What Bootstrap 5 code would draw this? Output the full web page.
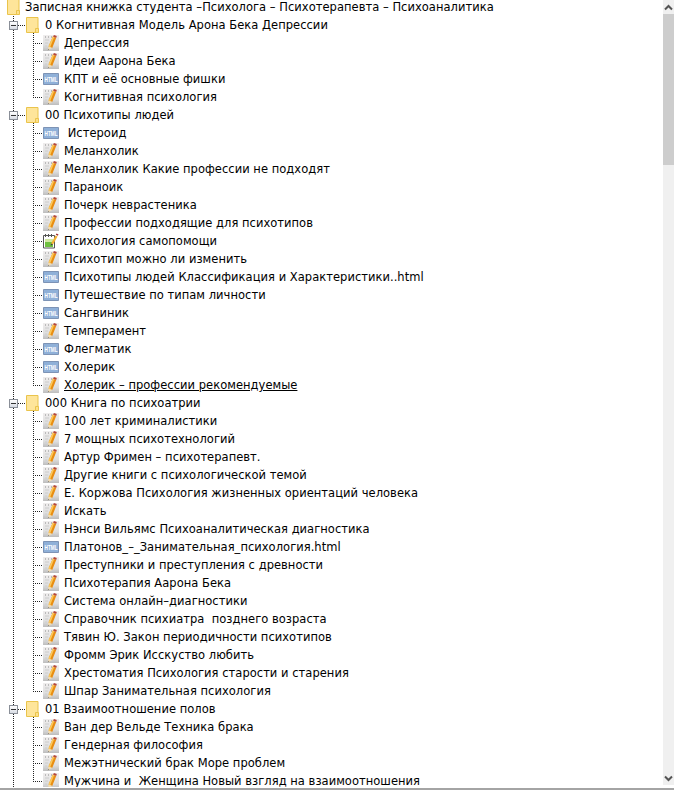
<!DOCTYPE html>
<html lang="ru"><head><meta charset="utf-8"><title>Дерево</title>
<link href="https://cdn.jsdelivr.net/npm/bootstrap@5.3.0/dist/css/bootstrap.min.css" rel="stylesheet">
<style>
html,body{height:790px;overflow:hidden;background:#fff}
.pane{height:787px;overflow:hidden}
.bottomedge{height:2px;margin-top:1px;background:#a4a4a4}
.treewrap{flex:1 1 auto;min-width:0;overflow:hidden}
.tree,.tree ul{list-style:none;margin:0;padding:0}
.tree{margin-top:-2px;font:11.5px/18px "DejaVu Sans",sans-serif;letter-spacing:.03px;color:#000}
.rw{height:18px;display:flex;align-items:center;white-space:pre;position:relative}
.rootrw{padding-left:7px}
.rootrw svg{margin-right:5px}
.grp{position:relative}
.grp::before{content:"";position:absolute;left:13px;top:0;bottom:0;width:1px;background:repeating-linear-gradient(#222 0 1px,transparent 1px 2px)}
.fold{padding-left:26px}
.fold svg.fi{margin-right:6px}
.fold::before{content:"";position:absolute;left:18px;top:9px;width:8px;height:1px;background:repeating-linear-gradient(90deg,#222 0 1px,transparent 1px 2px)}
.exp{position:absolute;left:9px;top:5px;width:9px;height:9px;background:linear-gradient(#fff,#d8dce4);border:1px solid #8a8f98;z-index:1}
.exp::after{content:"";position:absolute;left:1px;top:3px;width:5px;height:1px;background:#333}
.kids{position:relative}
.kids::before{content:"";position:absolute;left:33px;top:-1px;bottom:9px;width:1px;background:repeating-linear-gradient(#222 0 1px,transparent 1px 2px)}
.leaf{padding-left:43px}
.leaf::before{content:"";position:absolute;left:33px;top:9px;width:10px;height:1px;background:repeating-linear-gradient(90deg,#222 0 1px,transparent 1px 2px)}
.leaf svg{margin-right:5px;flex:none}
.hov{text-decoration:underline}
.sbar{flex:0 0 11px;height:785px;background:#f0f0f0;display:flex;flex-direction:column}
.sup{height:14px;display:flex;align-items:center;justify-content:center}
.sthumb{height:151px;background:#cdcdcd}
.sgut{flex:1 1 auto}
.htmltxt{font:bold 8px "Liberation Sans",sans-serif;fill:#fff}
</style></head><body>
<svg width="0" height="0" class="position-absolute">
<defs>
<linearGradient id="pg" x1="0" y1="0" x2="0" y2="1"><stop offset="0" stop-color="#f0eeee"/><stop offset=".65" stop-color="#dedede"/><stop offset="1" stop-color="#bdbdbd"/></linearGradient>
<symbol id="fo" viewBox="0 0 13 16"><path d="M.5.5h11.500v15H.5z" fill="#fee59a" stroke="#eac44c"/><path d="M9.500 11.500h3v4h-3z" fill="#fde08a" stroke="#eac44c"/></symbol>
<symbol id="pe" viewBox="0 0 16 16"><path d="M0 0h16v16H0z" fill="url(#pg)"/><path d="M2 1h1v2H2zM5 1h1v2H5zM8 1h1v2H8z" fill="#bbb"/><path d="M2 5h4M2 8h3M2 11h2" stroke="#cccccc"/><path d="M9.800 1.500l3.400 1.500-4 10-3.700-1.500z" fill="#e98e12"/><path d="M9.800 1.500l1.400.6-4 10.200-1.700-.8z" fill="#fbc95c"/><path d="M10 1.500l3.200 1.500.6-2L11 0z" fill="#b5483a"/><path d="M5.500 11.500l3.700 1.500-4 2.200z" fill="#f4dcae"/><path d="M4.700 15.200l1-1 .5.500z" fill="#333"/></symbol>
<symbol id="ht" viewBox="0 0 16 16"><path d="M.5 2.500h15v11H.5z" fill="#8fb0d8" stroke="#7d93b5"/><text class="htmltxt" x="1.500" y="11" textLength="13" lengthAdjust="spacingAndGlyphs">HTML</text></symbol>
<symbol id="nt" viewBox="0 0 16 16"><path d="M.5 2.500h11v12.500H.5z" fill="#fff" stroke="#555"/><path d="M2 9h8v5H2z" fill="#6fc040"/><path d="M2 6h8v3H2z" fill="#d2e8a2"/><path d="M2 1h1v3H2zM5 1h1v3H5zM8 1h1v3H8z" fill="#555"/><path d="M12.500 2.500l2 1-4.500 8-2-1z" fill="#f3b234"/><path d="M13.500.5l2 1-.7 1.300-2-1z" fill="#a02a2a"/><path d="M8 10.500l2 1-2.300 1.300z" fill="#444"/></symbol>
</defs></svg>
<div class="d-flex flex-row pane">
<div class="treewrap">
<div class="tree">
<div class="rw rootrw"><svg class="fi" width="13" height="16"><use href="#fo"/></svg>Записная книжка студента –Психолога – Психотерапевта – Психоаналитика</div>
<div class="grp">
<div class="rw fold"><span class="exp"></span><svg class="fi" width="13" height="16"><use href="#fo"/></svg>0 Когнитивная Модель Арона Бека Депрессии</div>
<ul class="kids">
<li class="rw leaf"><svg width="16" height="16"><use href="#pe"/></svg>Депрессия</li>
<li class="rw leaf"><svg width="16" height="16"><use href="#pe"/></svg>Идеи Аарона Бека</li>
<li class="rw leaf"><svg width="16" height="16"><use href="#ht"/></svg>КПТ и её основные фишки</li>
<li class="rw leaf"><svg width="16" height="16"><use href="#pe"/></svg>Когнитивная психология</li>
</ul>
<div class="rw fold"><span class="exp"></span><svg class="fi" width="13" height="16"><use href="#fo"/></svg>00 Психотипы людей</div>
<ul class="kids">
<li class="rw leaf"><svg width="16" height="16"><use href="#ht"/></svg> Истероид</li>
<li class="rw leaf"><svg width="16" height="16"><use href="#pe"/></svg>Меланхолик</li>
<li class="rw leaf"><svg width="16" height="16"><use href="#pe"/></svg>Меланхолик Какие профессии не подходят</li>
<li class="rw leaf"><svg width="16" height="16"><use href="#pe"/></svg>Параноик</li>
<li class="rw leaf"><svg width="16" height="16"><use href="#pe"/></svg>Почерк неврастеника</li>
<li class="rw leaf"><svg width="16" height="16"><use href="#pe"/></svg>Профессии подходящие для психотипов</li>
<li class="rw leaf"><svg width="16" height="16"><use href="#nt"/></svg>Психология самопомощи</li>
<li class="rw leaf"><svg width="16" height="16"><use href="#pe"/></svg>Психотип можно ли изменить</li>
<li class="rw leaf"><svg width="16" height="16"><use href="#ht"/></svg>Психотипы людей Классификация и Характеристики..html</li>
<li class="rw leaf"><svg width="16" height="16"><use href="#ht"/></svg>Путешествие по типам личности</li>
<li class="rw leaf"><svg width="16" height="16"><use href="#ht"/></svg>Сангвиник</li>
<li class="rw leaf"><svg width="16" height="16"><use href="#pe"/></svg>Темперамент</li>
<li class="rw leaf"><svg width="16" height="16"><use href="#ht"/></svg>Флегматик</li>
<li class="rw leaf"><svg width="16" height="16"><use href="#ht"/></svg>Холерик</li>
<li class="rw leaf"><svg width="16" height="16"><use href="#pe"/></svg><span class="hov">Холерик – профессии рекомендуемые</span></li>
</ul>
<div class="rw fold"><span class="exp"></span><svg class="fi" width="13" height="16"><use href="#fo"/></svg>000 Книга по психоатрии</div>
<ul class="kids">
<li class="rw leaf"><svg width="16" height="16"><use href="#pe"/></svg>100 лет криминалистики</li>
<li class="rw leaf"><svg width="16" height="16"><use href="#pe"/></svg>7 мощных психотехнологий</li>
<li class="rw leaf"><svg width="16" height="16"><use href="#pe"/></svg>Артур Фримен – психотерапевт.</li>
<li class="rw leaf"><svg width="16" height="16"><use href="#pe"/></svg>Другие книги с психологической темой</li>
<li class="rw leaf"><svg width="16" height="16"><use href="#pe"/></svg>Е. Коржова Психология жизненных ориентаций человека</li>
<li class="rw leaf"><svg width="16" height="16"><use href="#pe"/></svg>Искать</li>
<li class="rw leaf"><svg width="16" height="16"><use href="#pe"/></svg>Нэнси Вильямс Психоаналитическая диагностика</li>
<li class="rw leaf"><svg width="16" height="16"><use href="#ht"/></svg>Платонов_–_Занимательная_психология.html</li>
<li class="rw leaf"><svg width="16" height="16"><use href="#pe"/></svg>Преступники и преступления с древности</li>
<li class="rw leaf"><svg width="16" height="16"><use href="#pe"/></svg>Психотерапия Аарона Бека</li>
<li class="rw leaf"><svg width="16" height="16"><use href="#pe"/></svg>Система онлайн–диагностики</li>
<li class="rw leaf"><svg width="16" height="16"><use href="#pe"/></svg>Справочник психиатра  позднего возраста</li>
<li class="rw leaf"><svg width="16" height="16"><use href="#pe"/></svg>Тявин Ю. Закон периодичности психотипов</li>
<li class="rw leaf"><svg width="16" height="16"><use href="#pe"/></svg>Фромм Эрик Исскуство любить</li>
<li class="rw leaf"><svg width="16" height="16"><use href="#pe"/></svg>Хрестоматия Психология старости и старения</li>
<li class="rw leaf"><svg width="16" height="16"><use href="#pe"/></svg>Шпар Занимательная психология</li>
</ul>
<div class="rw fold"><span class="exp"></span><svg class="fi" width="13" height="16"><use href="#fo"/></svg>01 Взаимоотношение полов</div>
<ul class="kids">
<li class="rw leaf"><svg width="16" height="16"><use href="#pe"/></svg>Ван дер Вельде Техника брака</li>
<li class="rw leaf"><svg width="16" height="16"><use href="#pe"/></svg>Гендерная философия</li>
<li class="rw leaf"><svg width="16" height="16"><use href="#pe"/></svg>Межэтнический брак Море проблем</li>
<li class="rw leaf"><svg width="16" height="16"><use href="#pe"/></svg>Мужчина и  Женщина Новый взгляд на взаимоотношения</li>
</ul>
</div></div></div>
<div class="sbar"><div class="sup"><svg width="9" height="7" viewBox="0 0 9 7"><path d="M1 5.500l3.500-3.500 3.500 3.500" fill="none" stroke="#555" stroke-width="2"/></svg></div><div class="sthumb"></div><div class="sgut"></div><div class="sup"><svg width="9" height="7" viewBox="0 0 9 7"><path d="M1 1.500l3.500 3.500 3.500-3.500" fill="none" stroke="#555" stroke-width="2"/></svg></div></div>
</div>
<div class="bottomedge"></div>
<script src="https://cdn.jsdelivr.net/npm/bootstrap@5.3.0/dist/js/bootstrap.bundle.min.js"></script>
</body></html>
